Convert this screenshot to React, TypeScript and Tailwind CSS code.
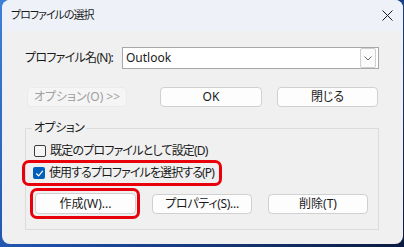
import React from "react";

const font = "font-['Noto_Sans','Noto_Sans_CJK_JP',sans-serif] [font-feature-settings:'palt'] whitespace-nowrap";

function Btn({ children, className = "" }: { children: React.ReactNode; className?: string }) {
  return (
    <div
      className={`flex items-center justify-center rounded-[4px] border border-[#d0d0d0] bg-[#fdfdfd] text-[12px] text-[#1a1a1a] ${className}`}
    >
      {children}
    </div>
  );
}

function Check({ checked }: { checked?: boolean }) {
  return checked ? (
    <div className="flex h-[12px] w-[12px] shrink-0 items-center justify-center rounded-[2px] bg-[#005fb8]">
      <svg width="9" height="9" viewBox="0 0 9 9" fill="none">
        <path d="M1.5 4.8 L3.6 6.8 L7.6 2.2" stroke="#fff" strokeWidth="1.2" strokeLinecap="round" strokeLinejoin="round" />
      </svg>
    </div>
  ) : (
    <div className="h-[12px] w-[12px] shrink-0 rounded-[2px] border border-[#3a3a3a] bg-[#f6f6f6]" />
  );
}

export default function App() {
  return (
    <div
      className={`h-[247px] w-[404px] overflow-hidden bg-[linear-gradient(135deg,#3d80da_0%,#1d4fa8_45%,#0c1a40_100%)] pb-[3px] pl-[2px] pr-[1px] ${font}`}
    >
      <div className="flex h-full flex-col overflow-hidden rounded-[8px] bg-[#f0f0f0]">
        {/* title bar */}
        <div className="flex h-[31px] shrink-0 items-center justify-between bg-[#eef2f8] pl-[9px] pr-[10px]">
          <span className="text-[11px] tracking-[-1px] text-[#1a1a1a]">プロファイルの選択</span>
          <svg width="11" height="11" viewBox="0 0 11 11">
            <path d="M0.5 0.5 L10.5 10.5 M10.5 0.5 L0.5 10.5" stroke="#1a1a1a" strokeWidth="1" />
          </svg>
        </div>

        <div className="flex flex-col pl-[23px] pt-[16px]">
          {/* profile row */}
          <div className="flex items-center">
            <span className="w-[97px] text-[12px] tracking-[-0.7px] text-[#1a1a1a]">プロファイル名(N):</span>
            <div className="flex h-[22px] w-[257px] items-center justify-between border border-[#a8a8a8] bg-white pl-[3px] pr-[2px]">
              <span className="text-[12px] text-[#1a1a1a]">Outlook</span>
              <div className="flex h-[20px] w-[16px] items-center justify-center rounded-[2px] border border-[#cfcfcf] bg-[#fbfbfb]">
                <svg width="8" height="5" viewBox="0 0 8 5">
                  <path d="M0.5 0.5 L4 4 L7.5 0.5" stroke="#555" strokeWidth="0.9" fill="none" />
                </svg>
              </div>
            </div>
          </div>

          {/* button row */}
          <div className="mt-[18px] flex items-center">
            <div className="ml-[2px] flex h-[20px] w-[100px] items-center justify-center rounded-[4px] border border-[#ebebeb] bg-[#f5f5f5] text-[12px] text-[#a0a0a0]">
              オプション(O)&nbsp;&gt;&gt;
            </div>
            <Btn className="ml-[33px] h-[20px] w-[102px] border-[#0067c0]">OK</Btn>
            <Btn className="ml-[15px] h-[20px] w-[101px]">閉じる</Btn>
          </div>

          {/* group box */}
          <div className="relative mt-[21px] flex h-[102px] w-[354px] flex-col border border-[#dcdcdc] pt-[15px]">
            <span className="absolute left-[6px] top-[-9px] bg-[#f0f0f0] px-[2px] text-[12px] leading-[16px] tracking-[-0.5px] text-[#1a1a1a]">
              オプション
            </span>
            <div className="flex h-[14px] items-center gap-[4px] pl-[8px]">
              <Check />
              <span className="text-[12px] tracking-[-0.8px] text-[#1a1a1a]">既定のプロファイルとして設定(D)</span>
            </div>
            <div className="-ml-[4px] mt-[2px] flex h-[26px] w-[200px] items-center gap-[4px] rounded-[7px] border-[3px] border-[#e8000b] pl-[8px]">
              <Check checked />
              <span className="text-[12px] tracking-[-0.9px] text-[#1a1a1a]">使用するプロファイルを選択する(P)</span>
            </div>
            <div className="mt-[2px] flex items-center">
              <div className="ml-[4px] flex h-[31px] w-[110px] items-center rounded-[7px] border-[3px] border-[#e8000b] pl-[2px]">
                <Btn className="h-[21px] w-[101px]">作成(W)...</Btn>
              </div>
              <Btn className="ml-[12px] h-[20px] w-[100px] tracking-[-0.3px]">プロパティ(S)...</Btn>
              <Btn className="ml-[16px] h-[20px] w-[100px]">削除(T)</Btn>
            </div>
          </div>
        </div>
      </div>
    </div>
  );
}
